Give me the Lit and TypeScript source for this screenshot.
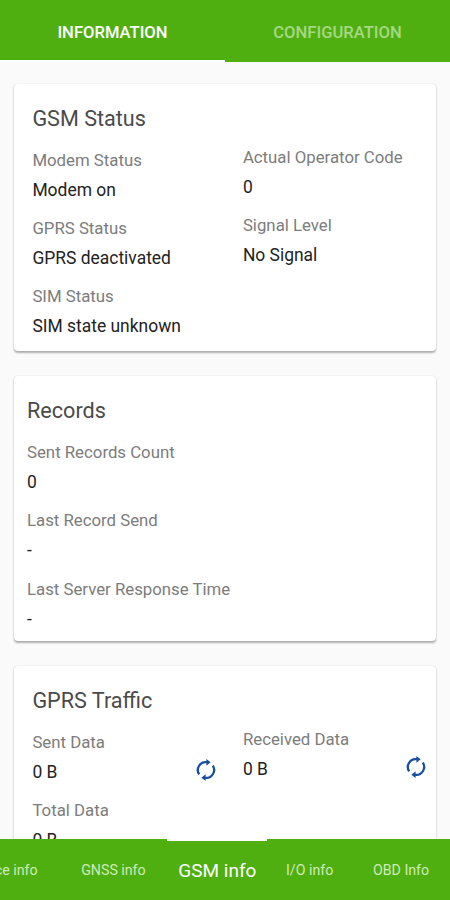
import { LitElement, html, css } from "lit";
import { customElement, property } from "lit/decorators.js";

@customElement("refresh-icon")
class RefreshIcon extends LitElement {
  static styles = css`
    :host { display: block; width: 24px; height: 24px; }
    svg { display: block; }
  `;
  render() {
    return html`<svg width="24" height="24" viewBox="0 0 24 24">
      <g fill="none" stroke="#174f9e" stroke-width="2.3">
        <path d="M5.2 16.4A7.9 7.9 0 0 1 13 4.2" />
        <path d="M18.8 7.6A7.9 7.9 0 0 1 11 19.8" />
      </g>
      <path fill="#174f9e" d="M12.4 .9 16.6 4.3 12.4 7.7ZM11.6 23.1 7.4 19.7 11.6 16.3Z" />
    </svg>`;
  }
}

@customElement("info-field")
class InfoField extends LitElement {
  @property() label = "";
  @property() value = "";
  @property({ type: Boolean }) refresh = false;
  static styles = css`
    :host { display: block; height: 68.4px; }
    .label { height: 30.2px; line-height: 24px; font-size: 16.8px; color: #7c7c7c; }
    .value { display: flex; justify-content: space-between; height: 24px; line-height: 24px; font-size: 17.45px; color: #222; }
    refresh-icon { margin: -2px 5px 0 0; }
  `;
  render() {
    return html`<div class="label">${this.label}</div>
      <div class="value"><span>${this.value}</span>${this.refresh ? html`<refresh-icon></refresh-icon>` : ""}</div>`;
  }
}

@customElement("app-root")
class AppRoot extends LitElement {
  static styles = css`
    :host { display: flex; flex-direction: column; height: 900px; overflow: hidden; background: #fafafa; font-family: Roboto, "Liberation Sans", sans-serif; }
    * { box-sizing: border-box; }
    .tabs { display: grid; grid-template-columns: 225px 225px; height: 62px; flex: none; background: #50af10; color: #a6d884; font-size: 16.6px; font-weight: 500; line-height: 65px; text-align: center; }
    .tab { height: 62px; }
    .tab.active { color: #fff; border-bottom: 2px solid #fff; }
    .content { flex: 1; min-height: 0; overflow: hidden; padding: 22px 14px 0; }
    .card { height: 267.4px; margin-bottom: 25px; padding: 21px 2px 0 18.4px; background: #fff; border-radius: 4px; box-shadow: 0 1.5px 2px rgba(0,0,0,.3), 0 0 1px rgba(0,0,0,.1); }
    .card.records { height: 265px; padding-left: 13px; }
    .title { height: 42.5px; line-height: 28px; font-size: 21.6px; color: #4a4a4a; }
    .columns { display: grid; grid-template-columns: 190.5px 190.5px; column-gap: 20px; }
    .right { margin-top: -3px; }
    .bottom { display: flex; flex: none; height: 61px; background: #50af10; color: #cdebb8; font-size: 14.2px; line-height: 63px; white-space: nowrap; }
    .item { text-align: center; }
    .first { display: flex; justify-content: flex-end; width: 59.5px; padding-right: 22px; }
    .gnss { width: 108px; }
    .gsm { width: 100px; color: #fff; font-size: 19px; border-top: 2px solid #fff; line-height: 60px; }
    .io { width: 85px; }
    .obd { width: 98px; }
  `;
  render() {
    return html`
      <div class="tabs"><div class="tab active">INFORMATION</div><div class="tab">CONFIGURATION</div></div>
      <div class="content">
        <section class="card">
          <div class="title">GSM Status</div>
          <div class="columns">
            <div>
              <info-field label="Modem Status" value="Modem on"></info-field>
              <info-field label="GPRS Status" value="GPRS deactivated"></info-field>
              <info-field label="SIM Status" value="SIM state unknown"></info-field>
            </div>
            <div class="right">
              <info-field label="Actual Operator Code" value="0"></info-field>
              <info-field label="Signal Level" value="No Signal"></info-field>
            </div>
          </div>
        </section>
        <section class="card records">
          <div class="title">Records</div>
          <info-field label="Sent Records Count" value="0"></info-field>
          <info-field label="Last Record Send" value="-"></info-field>
          <info-field label="Last Server Response Time" value="-"></info-field>
        </section>
        <section class="card">
          <div class="title">GPRS Traffic</div>
          <div class="columns">
            <div>
              <info-field label="Sent Data" value="0 B" refresh></info-field>
              <info-field label="Total Data" value="0 B"></info-field>
            </div>
            <div class="right"><info-field label="Received Data" value="0 B" refresh></info-field></div>
          </div>
        </section>
      </div>
      <nav class="bottom">
        <div class="item first">ce info</div>
        <div class="item gnss">GNSS info</div>
        <div class="item gsm">GSM info</div>
        <div class="item io">I/O info</div>
        <div class="item obd">OBD Info</div>
      </nav>`;
  }
}
